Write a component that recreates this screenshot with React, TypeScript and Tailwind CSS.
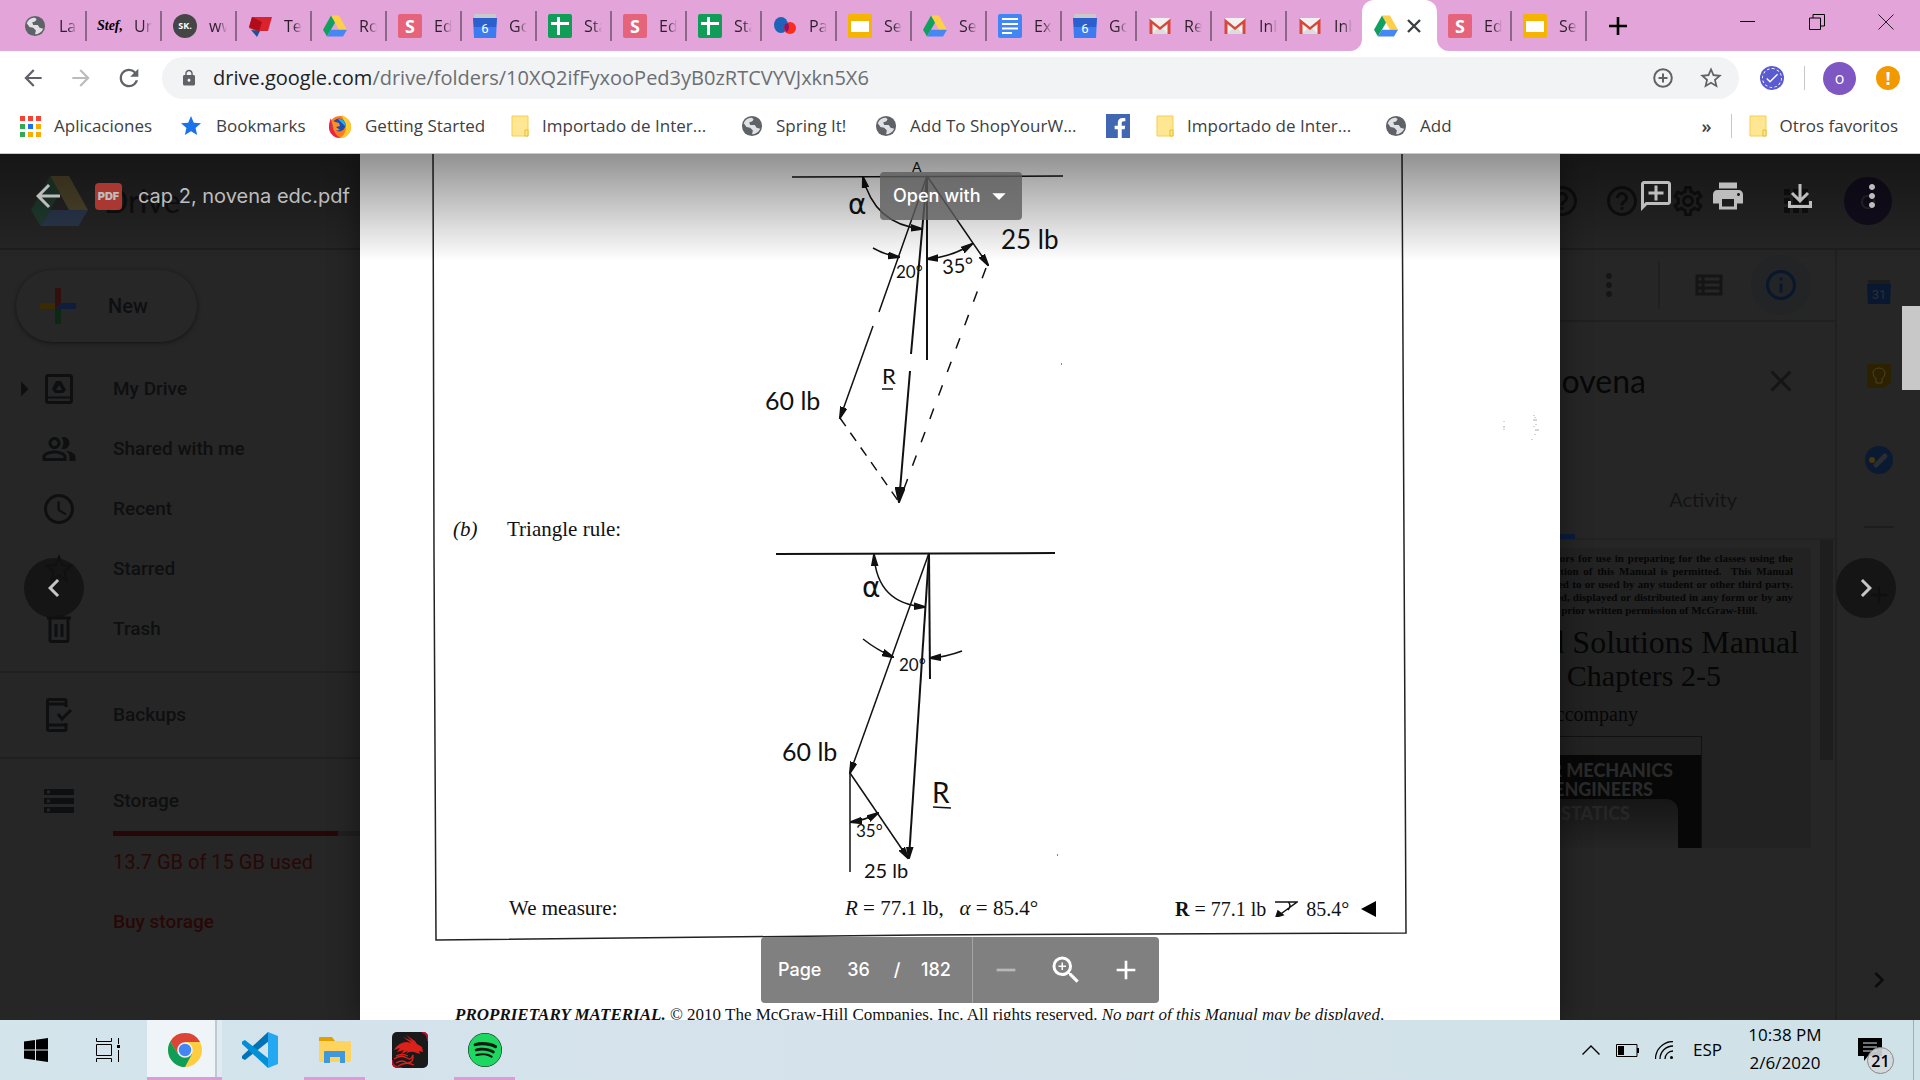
import type { ReactNode } from "react"
import {
  MdAdd,
  MdApps,
  MdArrowBack,
  MdArrowDropDown,
  MdArrowForward,
  MdArrowRight,
  MdCheck,
  MdChevronLeft,
  MdChevronRight,
  MdClose,
  MdHelpOutline,
  MdInfoOutline,
  MdLock,
  MdMoreVert,
  MdOutlineAddComment,
  MdOutlinePeopleAlt,
  MdOutlineSettings,
  MdOutlineViewList,
  MdPrint,
  MdRefresh,
  MdRemove,
  MdSchedule,
  MdStar,
  MdStarBorder,
  MdStorage,
  MdZoomIn,
} from "react-icons/md"
import { FaFacebookF, FaSpotify } from "react-icons/fa"

/* ---------- Small logos ---------- */

const DriveLogo = ({ className = "size-6" }: { className?: string }) => (
  <svg viewBox="0 0 57 50" className={className}>
    <path d="M19 0 L38 0 L57 34 L38 34 Z" fill="#ffcf48" />
    <path d="M19 0 L28.500 17 L9.500 50 L0 34 Z" fill="#11a05e" />
    <path d="M19 34 L57 34 L47.500 50 L9.500 50 Z" fill="#4587f4" />
  </svg>
)

const Globe = () => (
  <svg viewBox="0 0 24 24" className="size-[22px] shrink-0">
    <circle cx="12" cy="12" r="11" fill="#5f6368" />
    <path
      d="M3 9 C5 4 9 3 12 3 L14 5 L12 7 L9 8 L10 11 L15 11 L17 14 L21 15 C19 19 16 21 12 21 L13 17 L10 14 L6 13 Z"
      fill="#dfe1e5"
    />
    <path d="M14 4 L19 6 L21 11 L18 11 L16 8 L13 8 Z" fill="#5f6368" />
  </svg>
)

const Square = ({ children, className }: { children?: ReactNode; className: string }) => (
  <span className={`flex size-6 items-center justify-center rounded-[2px] ${className}`}>{children}</span>
)

const Stef = () => <span className="font-['Liberation_Serif',serif] text-sm font-bold italic text-black">Stef,</span>

const Sk = () => (
  <span className="flex size-6 items-center justify-center rounded-full bg-[#454545] text-[9px] font-bold text-white">
    SK.
  </span>
)

const Hex = () => (
  <svg viewBox="0 0 24 24" className="size-6">
    <path d="M4 3 L24 3 L20 17 L8 17 L1 14 Z" fill="#d9232e" />
    <path d="M4 3 L14 8 L11 17 L1 13 Z" fill="#b00d18" />
    <path d="M3 16 L12 17 L9 23 Z" fill="#17539c" />
  </svg>
)

const Sigma = () => (
  <Square className="bg-[#e5637b]">
    <b className="text-lg text-white">S</b>
  </Square>
)

const CalendarSix = () => (
  <svg viewBox="0 0 24 24" className="size-6">
    <rect x="1" y="0" width="22" height="5" rx="1" fill="#c9c9c9" />
    <path d="M0 4 H24 L23 24 H1 Z" fill="#3d7bf0" />
    <path d="M0 4 H24 L23 13 H1 Z" fill="#2c5fce" />
    <text x="12" y="19" textAnchor="middle" fontSize="13" fontFamily="Roboto, sans-serif" fill="#fff">
      6
    </text>
  </svg>
)

const Sheets = () => (
  <svg viewBox="0 0 24 24" className="size-6">
    <rect width="24" height="24" rx="2" fill="#0f9d58" />
    <path d="M3 9.500 H21 M10.500 3 V21" stroke="#fff" strokeWidth="3" />
  </svg>
)

const Blobs = () => (
  <svg viewBox="0 0 24 24" className="size-6">
    <ellipse cx="8" cy="11" rx="7" ry="8" fill="#1f63b8" />
    <ellipse cx="17" cy="14" rx="6" ry="6" fill="#fb2c1c" />
    <path d="M12 10 A6 6 0 0 0 14 18 A8 8 0 0 0 15 9 Z" fill="#8d1467" />
  </svg>
)

const Slides = () => (
  <svg viewBox="0 0 24 24" className="size-6">
    <rect width="24" height="24" rx="2" fill="#f5b400" />
    <rect x="3" y="7" width="18" height="11" fill="#fff" />
  </svg>
)

const Docs = () => (
  <svg viewBox="0 0 24 24" className="size-6">
    <rect width="24" height="24" rx="2" fill="#4285f4" />
    <path d="M4 5 H20 M4 10 H20 M4 14.500 H20 M4 19 H14" stroke="#fff" strokeWidth="2.200" />
  </svg>
)

const Gmail = () => (
  <svg viewBox="0 0 24 24" className="size-6">
    <path d="M2 4 H22 V20 H2 Z" fill="#f1f1f1" />
    <path d="M4 20 L12 12 L20 20 Z" fill="#dcdcdc" />
    <path d="M1.500 20 V4.500 L12 13 L22.500 4.500 V20 H19.500 V10 L12 16 L4.500 10 V20 Z" fill="#d8483a" />
  </svg>
)

const Folder = () => (
  <svg viewBox="0 0 18 22" className="h-[22px] w-[18px] shrink-0">
    <path d="M1 1 H17 V21 H1 Z" fill="#ffe693" stroke="#f5cf4e" />
    <path d="M14 21 V15 H17 V21 Z" fill="#ffe693" stroke="#e8bd2f" />
  </svg>
)

const Firefox = () => (
  <svg viewBox="0 0 24 24" className="size-6 shrink-0">
    <circle cx="12" cy="13" r="11" fill="#ff7a1a" />
    <path d="M14 1 C18 3 23 7 23 13 A11 11 0 0 1 12 24 C18 20 19 14 17 9 C16 6 14 4 14 1 Z" fill="#ffcb2e" />
    <path d="M12 24 A11 11 0 0 1 1 13 C1 9 2 6 3 4 C4 10 4 18 12 24 Z" fill="#e8234b" />
    <circle cx="11" cy="11" r="6.500" fill="#1c4fb3" />
    <path d="M4 7 L11 9 L12 12 L8 13 L12 16 L6 17 Z" fill="#ff8f1f" />
    <path d="M10 5 A6 6 0 0 1 17 12 L13 8 Z" fill="#21b4ef" />
  </svg>
)

const AppsGrid = () => (
  <span className="grid shrink-0 grid-cols-3 gap-[3px]">
    {["bg-[#f44336]", "bg-[#f44336]", "bg-[#f44336]", "bg-[#34a853]", "bg-[#1a73e8]", "bg-[#fbab00]", "bg-[#34a853]", "bg-[#fbab00]", "bg-[#fbab00]"].map(
      (c, i) => (
        <span key={i} className={`size-[5px] ${c}`} />
      )
    )}
  </span>
)

/* ---------- Browser chrome ---------- */

const tabs = [
  { label: "Las", icon: <Globe /> },
  { label: "Un", icon: <Stef /> },
  { label: "ww", icon: <Sk /> },
  { label: "Tec", icon: <Hex /> },
  { label: "Ro", icon: <DriveLogo /> },
  { label: "Ed", icon: <Sigma /> },
  { label: "Go", icon: <CalendarSix /> },
  { label: "Sta", icon: <Sheets /> },
  { label: "Ed", icon: <Sigma /> },
  { label: "Sta", icon: <Sheets /> },
  { label: "Pa", icon: <Blobs /> },
  { label: "Se", icon: <Slides /> },
  { label: "Se", icon: <DriveLogo /> },
  { label: "Ex", icon: <Docs /> },
  { label: "Go", icon: <CalendarSix /> },
  { label: "Re", icon: <Gmail /> },
  { label: "Inb", icon: <Gmail /> },
  { label: "Inb", icon: <Gmail /> },
  { label: "", icon: <DriveLogo />, active: true },
  { label: "Ed", icon: <Sigma /> },
  { label: "Se", icon: <Slides /> },
]

const bookmarks = [
  { label: "Aplicaciones", icon: <AppsGrid />, width: "w-[159px]" },
  { label: "Bookmarks", icon: <MdStar className="size-6 shrink-0 text-[#1a73e8]" />, width: "w-[149px]" },
  { label: "Getting Started", icon: <Firefox />, width: "w-[183px]" },
  { label: "Importado de Inter...", icon: <Folder />, width: "w-[230px]" },
  { label: "Spring It!", icon: <Globe />, width: "w-[134px]" },
  { label: "Add To ShopYourW...", icon: <Globe />, width: "w-[231px]" },
  {
    label: "",
    icon: (
      <span className="flex size-6 items-end justify-end bg-[#4267b2]">
        <FaFacebookF className="size-5 text-white" />
      </span>
    ),
    width: "w-[50px]",
  },
  { label: "Importado de Inter...", icon: <Folder />, width: "w-[229px]" },
  { label: "Add", icon: <Globe />, width: "w-[80px]" },
]

function TabStrip() {
  return (
    <div className="flex h-[51px] shrink-0 bg-[#e3a4da] pl-3 text-[#2b1f2a]">
      {tabs.map((tab, i) =>
        tab.active ? (
          <div key={i} className="relative flex w-[75px] items-center justify-between rounded-t-xl bg-white pl-3 pr-4">
            {/* flared feet of the active tab */}
            <svg viewBox="0 0 12 12" className="absolute -left-3 bottom-0 size-3">
              <path d="M12 0 V12 H0 A12 12 0 0 0 12 0 Z" fill="#fff" />
            </svg>
            <svg viewBox="0 0 12 12" className="absolute -right-3 bottom-0 size-3">
              <path d="M0 0 V12 H12 A12 12 0 0 1 0 0 Z" fill="#fff" />
            </svg>
            {tab.icon}
            <button aria-label="Close tab">
              <svg viewBox="0 0 14 14" className="size-[14px]" stroke="#3c4043" strokeWidth="2.400">
                <path d="M1 1 L13 13 M13 1 L1 13" />
              </svg>
            </button>
          </div>
        ) : (
          <button
            key={i}
            className={`flex w-[75px] items-center ${tabs[i + 1]?.active ? "" : "bg-[linear-gradient(#8d6788,#8d6788)] bg-[length:2px_30px] bg-right bg-no-repeat"}`}
          >
            <span className="ml-[11px] flex w-6 shrink-0 justify-center">{tab.icon}</span>
            <span className="ml-3 w-[18px] overflow-hidden text-left text-base whitespace-nowrap [mask-image:linear-gradient(to_right,#000_50%,transparent)]">
              {tab.label}
            </span>
          </button>
        )
      )}
      <button aria-label="New tab" className="flex w-[62px] items-center justify-center text-black">
        <svg viewBox="0 0 18 18" className="size-[18px]" stroke="currentColor" strokeWidth="2.600">
          <path d="M9 0 V18 M0 9 H18" />
        </svg>
      </button>
      <div className="ml-auto flex h-[43px]">
        <button aria-label="Minimize" className="flex w-[69px] items-center justify-center">
          <span className="h-px w-[15px] bg-black" />
        </button>
        <button aria-label="Restore" className="flex w-[69px] items-center justify-center">
          <svg viewBox="0 0 16 16" className="size-4" fill="none" stroke="#000">
            <path d="M0.500 4 H11.500 V15.500 H0.500 Z M4 4 V0.500 H15.500 V12 H11.500" />
          </svg>
        </button>
        <button aria-label="Close" className="flex w-[69px] items-center justify-center">
          <svg viewBox="0 0 16 16" className="size-4" stroke="#222">
            <path d="M0.500 0.500 L15.500 15.500 M15.500 0.500 L0.500 15.500" />
          </svg>
        </button>
      </div>
    </div>
  )
}

function AddressBar() {
  return (
    <div className="flex h-[54px] shrink-0 items-center bg-white pl-[9px]">
      <button aria-label="Back" className="flex w-12 justify-center text-[#5f6368]">
        <MdArrowBack className="size-[26px]" />
      </button>
      <button aria-label="Forward" className="flex w-12 justify-center text-[#babcbe]">
        <MdArrowForward className="size-[26px]" />
      </button>
      <button aria-label="Reload" className="flex w-12 justify-center text-[#5f6368]">
        <MdRefresh className="size-7" />
      </button>
      <div className="relative ml-[9px] flex h-[42px] flex-1 items-center rounded-full bg-[#f1f3f4] pl-[18px] text-[#5f6368]">
        <MdLock className="size-[18px]" />
        <a
          href="#folder"
          aria-label="Address"
          className="ml-[15px] flex-1 text-xl whitespace-nowrap text-[#6b6e72]"
        >
          <span className="text-[#202124]">drive.google.com</span>/drive/folders/10XQ2ifFyxooPed3yB0zRTCVYVJxkn5X6
        </a>
        <button aria-label="Zoom" className="flex w-12 justify-center">
          <svg viewBox="0 0 20 20" className="size-5" fill="none" stroke="currentColor" strokeWidth="2">
            <circle cx="10" cy="10" r="8.800" />
            <path d="M10 5.500 V14.500 M5.500 10 H14.500" />
          </svg>
        </button>
        <button aria-label="Bookmark this page" className="mr-1 flex w-12 justify-center">
          <MdStarBorder className="size-[26px]" />
        </button>
      </div>
      <div className="ml-[21px] flex items-center">
        <button aria-label="Extension" className="flex size-6 items-center justify-center rounded-full bg-[#5b5bd0]">
          <span className="flex size-5 items-center justify-center rounded-full border border-dashed border-white">
            <MdCheck className="size-4 text-white" />
          </span>
        </button>
        <span className="ml-5 h-6 w-px bg-[#c4c6c9]" />
        <button aria-label="Profile" className="ml-[18px] flex size-[33px] items-center justify-center rounded-full bg-[#7e57c2] text-base text-white">
          o
        </button>
        <button aria-label="Update" className="mr-5 ml-5 flex size-6 items-center justify-center rounded-full bg-[#f29900] text-lg font-bold text-white">
          !
        </button>
      </div>
    </div>
  )
}

function BookmarksBar() {
  return (
    <div className="flex h-[49px] shrink-0 items-center border-b border-[#c9cacc] bg-white pb-1.5 pl-5 text-[17px] text-[#3c4043]">
      {bookmarks.map((b, i) => (
        <a key={i} href="#bookmark" className={`flex shrink-0 items-center gap-[13px] whitespace-nowrap ${b.width}`}>
          {b.icon}
          {b.label}
        </a>
      ))}
      <button aria-label="More bookmarks" className="ml-auto text-lg font-semibold">
        »
      </button>
      <span className="ml-[19px] h-6 w-px bg-[#c4c6c9]" />
      <a href="#others" className="mr-[22px] ml-[17px] flex items-center gap-[13px] whitespace-nowrap">
        <Folder />
        Otros favoritos
      </a>
    </div>
  )
}

/* ---------- Drive, dimmed behind the viewer ---------- */

const MyDriveIcon = () => (
  <svg viewBox="0 0 28 30" className="h-[30px] w-7" fill="none" stroke="currentColor" strokeWidth="3">
    <rect x="1.500" y="1.500" width="25" height="27" rx="2" />
    <path d="M2 23.500 H26" strokeWidth="2" />
    <path d="M11 7 H16 L21 16 L18 19 H10 L7 15 Z M14 11 L11 16 H17 Z" fill="currentColor" fillRule="evenodd" stroke="none" />
  </svg>
)

const TrashIcon = () => (
  <svg viewBox="0 0 24 28" className="h-7 w-6" fill="none" stroke="currentColor" strokeWidth="3">
    <path d="M0 3 H24 M8 1 H16" />
    <path d="M3 4 V25 Q3 26.500 4.500 26.500 H19.500 Q21 26.500 21 25 V4" />
    <path d="M9 9 V22 M15 9 V22" />
  </svg>
)

const BackupIcon = () => (
  <svg viewBox="0 0 26 34" className="h-[34px] w-[26px]" fill="none" stroke="currentColor" strokeWidth="3">
    <path d="M20 9 V3 Q20 1.500 18.500 1.500 H3 Q1.500 1.500 1.500 3 V31 Q1.500 32.500 3 32.500 H18.500 Q20 32.500 20 31 V25 M2 6 H20 M2 27 H20" />
    <path d="M12 16 L16 21 L25 12" />
  </svg>
)

const navItems = [
  { label: "My Drive", icon: <MyDriveIcon /> },
  { label: "Shared with me", icon: <MdOutlinePeopleAlt className="size-9" /> },
  { label: "Recent", icon: <MdSchedule className="size-9" /> },
  { label: "Starred", icon: <MdStarBorder className="size-9" /> },
  { label: "Trash", icon: <TrashIcon /> },
]

function NavRow({ label, icon }: { label: string; icon: ReactNode }) {
  return (
    <a href="#nav" className="flex h-[60px] items-center">
      <span className="ml-10 flex w-[38px] justify-center">{icon}</span>
      <span className="ml-[35px]">{label}</span>
    </a>
  )
}

function Sidebar() {
  return (
    <aside className="w-[360px] shrink-0 font-['Roboto',sans-serif] text-[19px] font-medium text-[#0e0f10]">
      <button className="mt-5 ml-4 flex h-[72px] w-[181px] items-center rounded-full bg-[#272727] pl-6 shadow-[0_1px_4px_rgba(0,0,0,0.5)]">
        <svg viewBox="0 0 36 36" className="size-9">
          <path d="M15 0 H21 V15 L15 21 Z" fill="#33100d" />
          <path d="M0 15 H15 V21 H0 Z" fill="#3a2b05" />
          <path d="M15 21 H21 V36 H15 Z" fill="#0c2814" />
          <path d="M21 15 H36 V21 H15 Z" fill="#101d3a" />
        </svg>
        <span className="ml-8 text-xl tracking-normal">New</span>
      </button>
      <nav className="relative mt-[17px] border-b-2 border-[#202020] pb-3">
        <MdArrowRight className="absolute top-3 left-1.5 size-9" />
        {navItems.map((item) => (
          <NavRow key={item.label} {...item} />
        ))}
      </nav>
      <div className="border-b-2 border-[#202020] py-3">
        <NavRow label="Backups" icon={<BackupIcon />} />
      </div>
      <div className="pt-3">
        <NavRow label="Storage" icon={<MdStorage className="size-9" />} />
        <div className="ml-[113px] h-[5px] bg-[#1f1f20]">
          <div className="h-full w-[225px] bg-[#240706]" />
        </div>
        <p className="mt-3 ml-[113px] text-xl leading-7 font-normal text-[#280807]">13.7 GB of 15 GB used</p>
        <a href="#buy" className="mt-8 ml-[113px] block leading-7 text-[#280807]">
          Buy storage
        </a>
      </div>
    </aside>
  )
}

function Thumbnail() {
  return (
    <div className="mt-2 ml-6 h-[300px] w-[311px] overflow-hidden bg-[#222222] text-right font-['Liberation_Serif',serif] text-[#060606]">
      <div className="flex h-[68px] flex-col items-end pt-1 pr-[18px] text-[11px] leading-[13px] font-bold whitespace-nowrap [text-align-last:justify]">
        <p className="w-[270px]">instructors for use in preparing for the classes using the</p>
        <p className="w-[270px]">distribution of this Manual is permitted.&nbsp; This Manual</p>
        <p className="w-[276px]">distributed to or used by any student or other third party.</p>
        <p className="w-[280px]">reproduced, displayed or distributed in any form or by any</p>
        <p className="mr-9 w-[252px]">without the prior written permission of McGraw-Hill.</p>
      </div>
      <p className="mt-2.5 mr-3 text-[32px] leading-[33px] whitespace-nowrap">and Solutions Manual</p>
      <p className="mr-[90px] text-[30px] leading-[33px] whitespace-nowrap">, Chapters 2-5</p>
      <p className="mt-2 mr-[173px] text-xl leading-7">accompany</p>
      <div className="mt-2 mr-[109px] flex h-[130px] flex-col border border-[#111] font-['Lato',sans-serif] font-black text-[#2a2a2a]">
        <div className="h-[18px]" />
        <div className="h-[44px] bg-[#070707] pt-1.5 pr-7 text-lg leading-[19px]">
          <p>FOR MECHANICS</p>
          <p className="pr-5">ENGINEERS</p>
        </div>
        <div className="flex h-[66px] bg-[#070707]">
          <div className="mr-[23px] flex-1 rounded-tr-xl bg-gradient-to-b from-[#161616] to-[#2a2a2a] pr-12 text-lg text-[#262626]">
            STATICS
          </div>
        </div>
      </div>
    </div>
  )
}

function DetailsPanel() {
  return (
    <section className="w-[360px] shrink-0 border-r border-[#202020] text-[#151515]">
      <div className="flex h-[72px] items-center justify-end border-b-2 border-[#202020] pr-6">
        <MdMoreVert className="size-9" />
        <span className="ml-[31px] h-12 w-0.5 bg-[#202020]" />
        <MdOutlineViewList className="ml-[31px] size-9" />
        <span className="ml-6 flex size-[60px] items-center justify-center rounded-full bg-[#222426] text-[#08172d]">
          <MdInfoOutline className="size-9" />
        </span>
      </div>
      <div className="flex h-[118px] items-center justify-end pr-9">
        <h2 className="mr-[117px] text-[32px] text-[#070707]">novena</h2>
        <MdClose className="size-9" />
      </div>
      <div className="relative flex h-[100px] items-center justify-end border-b-2 border-[#202223] pt-5 pr-[98px] text-xl text-[#131313]">
        <span className="absolute -bottom-px left-0 h-[5px] w-[99px] bg-[#0a1c3c]" />
        Activity
      </div>
      <div className="flex justify-between pr-0.5">
        <Thumbnail />
        <span className="h-[220px] w-[13px] bg-[#1e1e1e]" />
      </div>
    </section>
  )
}

function SideRail() {
  return (
    <section className="flex w-[84px] shrink-0 flex-col items-center border-l border-[#202020] pt-[30px]">
      <svg viewBox="0 0 24 24" className="size-6">
        <rect x="1" width="22" height="5" fill="#1c1c1c" />
        <path d="M0 4 H24 L23 24 H1 Z" fill="#0a1730" />
        <text x="12" y="19" textAnchor="middle" fontSize="13" fontFamily="Roboto, sans-serif" fill="#2a2f38">
          31
        </text>
      </svg>
      <svg viewBox="0 0 24 24" className="mt-[60px] size-6">
        <path d="M1 0 H23 Q24 0 24 1 V18 L18 24 H1 Q0 24 0 23 V1 Q0 0 1 0 Z" fill="#2d2200" />
        <path d="M9 15 Q6 12 6 9 A6 5 0 0 1 18 9 Q18 12 15 15 V19 H9 Z" fill="none" stroke="#4a4128" />
      </svg>
      <svg viewBox="0 0 28 28" className="mt-[58px] size-7">
        <circle cx="14" cy="14" r="14" fill="#0b1a33" />
        <circle cx="7" cy="14" r="3" fill="#4a3808" />
        <path d="M11 19 L20 10" stroke="#2b2d30" strokeWidth="5" strokeLinecap="round" />
      </svg>
      <span className="mt-[52px] h-0.5 w-[30px] bg-[#1d1d1d]" />
      <MdAdd className="mt-[53px] size-7 text-[#050505]" />
      <MdChevronRight className="mt-auto mb-6 size-8 text-[#0c0c0c]" />
    </section>
  )
}

function DriveApp() {
  return (
    <div className="flex h-full flex-col">
      <header className="flex h-24 shrink-0 items-center border-b-2 border-[#1e1e1e] text-[#101010]">
        <DriveLogo className="ml-[31px] h-[50px] w-[57px] opacity-20" />
        <span className="ml-4 text-[32px]">Drive</span>
        <div className="ml-auto flex items-center">
          <MdHelpOutline className="size-9" />
          <MdHelpOutline className="ml-6 size-9" />
          <MdOutlineSettings className="ml-[30px] size-9" />
          <MdApps className="ml-[72px] size-9" />
          <span className="mr-7 ml-[30px] flex size-12 items-center justify-center rounded-full bg-[#130d1e] text-xl text-[#2a2a2a]">
            O
          </span>
        </div>
      </header>
      <div className="flex min-h-0 flex-1">
        <Sidebar />
        <div className="min-w-0 flex-1" />
        <DetailsPanel />
        <SideRail />
      </div>
    </div>
  )
}

/* ---------- PDF page ---------- */

const Arrowheads = () => (
  <defs>
    <marker id="head" viewBox="0 0 12 8" refX="11" refY="4" markerWidth="12" markerHeight="8" markerUnits="userSpaceOnUse" orient="auto-start-reverse">
      <path d="M0 1 L12 4 L0 7 Z" fill="#111" />
    </marker>
    <marker id="bighead" viewBox="0 0 16 10" refX="15" refY="5" markerWidth="16" markerHeight="10" markerUnits="userSpaceOnUse" orient="auto-start-reverse">
      <path d="M0 0 L16 5 L0 10 Z" fill="#111" />
    </marker>
  </defs>
)

function ParallelogramFigure() {
  return (
    <svg viewBox="0 0 1200 360" className="h-[360px] w-[1200px] shrink-0" fill="none" stroke="#111" strokeWidth="1.500">
      <Arrowheads />
      <path d="M432 23 L703 22" />
      <path d="M567 22 L519 158" />
      <path d="M513 172 L480 264" markerEnd="url(#head)" />
      <path d="M567 22 L551 200" strokeWidth="2" />
      <path d="M550 217 L539 348" strokeWidth="2" markerEnd="url(#bighead)" />
      <path d="M567 22 L567 206" strokeWidth="2" />
      <path d="M567 22 L628 111" markerEnd="url(#head)" />
      <path d="M626 114 L539 348" strokeDasharray="11 14" />
      <path d="M480 264 L539 348" strokeDasharray="10 8" />
      <path d="M503 23 Q514 70 562 75" markerStart="url(#head)" markerEnd="url(#head)" />
      <path d="M513 94 Q525 101 539 103" markerEnd="url(#head)" />
      <path d="M567 105 Q592 103 612 90" markerStart="url(#head)" markerEnd="url(#head)" />
      <path d="M522 235 H533" />
      {/* scanner specks */}
      <path d="M701 210 h1" strokeWidth="1" />
      <path d="M1144 267 v1 M1144 272 v2 M1144 275 v1 M1174 261 v1 M1175 263 v1 M1173 266 h4 M1176 270 v1 M1174 272 v1 M1175 276 h4 M1175 280 v1 M1172 285 v1" stroke="#aaa" strokeWidth="1" />
      <g fill="#111" stroke="none" fontFamily="Lato, sans-serif">
        <text x="552" y="18" fontSize="14">A</text>
        <text x="488" y="60" fontSize="28" fontFamily="'DejaVu Sans', sans-serif">α</text>
        <text x="536" y="124" fontSize="17">20°</text>
        <text x="582" y="119" fontSize="20" transform="rotate(-5 598 111)">35°</text>
        <text x="641" y="95" fontSize="26">25 lb</text>
        <text x="522" y="230" fontSize="22">R</text>
        <text x="405" y="256" fontSize="25">60 lb</text>
      </g>
    </svg>
  )
}

function TriangleFigure() {
  return (
    <svg viewBox="0 0 1200 338" className="h-[338px] w-[1200px] shrink-0" fill="none" stroke="#111" strokeWidth="1.500">
      <path d="M416 8 L695 7" strokeWidth="2" />
      <path d="M569 7 L490 227" markerEnd="url(#head)" />
      <path d="M569 7 L549 312" strokeWidth="2" markerEnd="url(#head)" />
      <path d="M569 7 L570 133" strokeWidth="2" />
      <path d="M490 227 L548 312" markerEnd="url(#head)" />
      <path d="M490 227 V326" />
      <path d="M514 9 Q517 58 565 61" markerStart="url(#head)" markerEnd="url(#head)" />
      <path d="M503 93 Q517 104 533 111" markerEnd="url(#head)" />
      <path d="M602 105 Q586 111 570 112" markerEnd="url(#head)" />
      <path d="M491 276 Q506 274 518 267" markerStart="url(#head)" markerEnd="url(#head)" />
      <path d="M573 261 L591 262" />
      <path d="M697 309 h1" strokeWidth="1" />
      <g fill="#111" stroke="none" fontFamily="Lato, sans-serif">
        <text x="502" y="51" fontSize="28" fontFamily="'DejaVu Sans', sans-serif">α</text>
        <text x="539" y="125" fontSize="17">20°</text>
        <text x="422" y="215" fontSize="25">60 lb</text>
        <text x="496" y="291" fontSize="17">35°</text>
        <text x="504" y="332" fontSize="20">25 lb</text>
        <text x="572" y="257" fontSize="28">R</text>
      </g>
    </svg>
  )
}

function PdfPage() {
  return (
    <article className="relative flex h-full w-[1200px] shrink-0 flex-col overflow-hidden bg-white font-['Liberation_Serif',serif] text-[21px] text-[#111]">
      {/* scanned page frame, slightly skewed */}
      <svg viewBox="0 0 1200 866" className="absolute top-0 left-0 h-[866px] w-[1200px]" fill="none" stroke="#222" strokeWidth="1.500">
        <path d="M73 0 L74 400 L76 786 L560 781 L1046 779 L1042 0" />
      </svg>
      <ParallelogramFigure />
      <div className="flex h-8 shrink-0 items-center pl-[93px]">
        <span className="w-[54px] italic">(b)</span>
        <span>Triangle rule:</span>
      </div>
      <TriangleFigure />
      <div className="flex h-[50px] shrink-0 items-center pl-[149px]">
        <span className="w-[336px]">We measure:</span>
        <span className="w-[330px] whitespace-pre">
          <i>R</i> = 77.1 lb,{"   "}<i>α</i> = 85.4°
        </span>
        <span className="flex items-center gap-2 text-xl">
          <span>
            <b>R</b> = 77.1 lb
          </span>
          <svg viewBox="0 0 24 16" className="h-4 w-6" fill="none" stroke="#111" strokeWidth="1.500">
            <path d="M1 1 H23 L4 15 M14 1 Q18 4 14 9" />
            <path d="M2 16 L4 10 L9 14 Z" fill="#111" />
          </svg>
          <span>85.4°</span>
          <svg viewBox="0 0 15 16" className="ml-1 h-4 w-[15px]">
            <path d="M15 0 V16 L0 8 Z" fill="#000" />
          </svg>
        </span>
      </div>
      <p className="mt-[71px] ml-[95px] shrink-0 text-[17px] leading-5 whitespace-nowrap">
        <b className="italic">PROPRIETARY MATERIAL.</b> © 2010 The McGraw-Hill Companies, Inc. All rights reserved.{" "}
        <i>No part of this Manual may be displayed,</i>
      </p>
    </article>
  )
}

/* ---------- Viewer controls ---------- */

function ViewerTopBar() {
  return (
    <div className="absolute inset-x-0 top-0 flex h-[107px] items-start bg-gradient-to-b from-black/43 to-transparent font-['Inter',sans-serif] text-[#bdbdbd]">
      <div className="flex h-[84px] flex-1 items-center pl-3">
        <button aria-label="Close viewer" className="ml-[18px]">
          <MdArrowBack className="size-9" />
        </button>
        <span className="ml-[29px] flex size-[27px] items-center justify-center rounded bg-[#a93832] text-[11px] font-black">PDF</span>
        <span className="ml-4 text-xl">cap 2, novena edc.pdf</span>
      </div>
      <button className="mt-[18px] flex h-12 w-[142px] items-center rounded bg-[#5c5c5c]/80 pl-[13px] text-lg font-medium text-white">
        Open with
        <MdArrowDropDown className="ml-0.5 size-8" />
      </button>
      <div className="flex h-[84px] flex-1 items-center justify-end pr-[30px]">
        <button aria-label="Add a comment" className="flex w-[72px] justify-end">
          <MdOutlineAddComment className="size-9 -scale-x-100" />
        </button>
        <button aria-label="Print" className="flex w-[72px] justify-end">
          <MdPrint className="size-9" />
        </button>
        <button aria-label="Download" className="flex w-[72px] justify-end">
          <svg viewBox="0 0 36 36" className="size-9" fill="none" stroke="currentColor" strokeWidth="3">
            <path d="M18 6 V22 M10 15 L18 23 L26 15 M7.500 23 V28.500 H28.500 V23" />
          </svg>
        </button>
        <button aria-label="More actions" className="flex w-[72px] justify-end">
          <MdMoreVert className="size-9" />
        </button>
      </div>
    </div>
  )
}

function PageControls() {
  return (
    <div className="absolute bottom-[17px] left-1/2 flex h-[66px] w-[398px] -translate-x-1/2 items-center rounded bg-[#808080] font-['Inter',sans-serif] text-lg font-medium text-white">
      <label htmlFor="page" className="w-[70px] pl-[17px]">
        Page
      </label>
      <input id="page" defaultValue="36" className="w-[55px] bg-transparent text-center" />
      <span className="w-[22px] text-center">/</span>
      <span className="flex-1 pr-2 text-center">182</span>
      <span className="h-full w-px bg-[#a4a4a4]" />
      <div className="flex h-full w-[186px] items-center justify-between px-[17px]">
        <button aria-label="Zoom out" className="text-[#b8b8b8]">
          <MdRemove className="size-8" />
        </button>
        <button aria-label="Fit to width">
          <MdZoomIn className="size-9" />
        </button>
        <button aria-label="Zoom in">
          <MdAdd className="size-8" />
        </button>
      </div>
    </div>
  )
}

function Viewer() {
  return (
    <div className="absolute inset-0">
      <div className="flex h-full justify-center">
        <div className="h-full shadow-[0_0_28px_rgba(0,0,0,0.45)]">
          <PdfPage />
        </div>
      </div>
      <ViewerTopBar />
      <button aria-label="Previous" className="absolute top-[404px] left-6 flex size-[60px] items-center justify-center rounded-full bg-[#111]/80 text-[#c6c6c6]">
        <MdChevronLeft className="size-9" />
      </button>
      <button aria-label="Next" className="absolute top-[404px] right-6 flex size-[60px] items-center justify-center rounded-full bg-[#111]/80 text-[#c6c6c6]">
        <MdChevronRight className="size-9" />
      </button>
      <span className="absolute top-[152px] right-0 h-[84px] w-[18px] bg-[#c8c8c8]" />
      <PageControls />
    </div>
  )
}

/* ---------- Windows taskbar ---------- */

const ChromeLogo = () => (
  <svg viewBox="0 0 34 34" className="size-[34px]">
    <circle cx="17" cy="17" r="17" fill="#ffcd40" />
    <path d="M2.300 8.500 A17 17 0 0 1 32 9 H17 L10 21 Z" fill="#db4437" />
    <path d="M2.300 8.500 A17 17 0 0 0 17 34 L24 21 L10 21 Z" fill="#0f9d58" />
    <circle cx="17" cy="17" r="7.800" fill="#f1f1f1" />
    <circle cx="17" cy="17" r="6.200" fill="#4285f4" />
  </svg>
)

const CodeLogo = () => (
  <svg viewBox="0 0 36 36" className="size-9">
    <path d="M26 0 L0 24 Q-1 26 1 27 L3 28 L27 9 Z" fill="#0073b7" />
    <path d="M26 36 L0 12 Q-1 10 1 9 L3 8 L27 27 Z" fill="#0090d8" />
    <path d="M26 0 L36 4 V32 L26 36 Z" fill="#25a8f2" />
  </svg>
)

const ExplorerLogo = () => (
  <svg viewBox="0 0 32 28" className="h-7 w-8">
    <path d="M0 2 Q0 1 1 1 H13 L16 5 H0 Z" fill="#e0a100" />
    <path d="M0 5 H31 Q32 5 32 6 V25 Q32 26 31 26 H1 Q0 26 0 25 Z" fill="#ffd45e" />
    <path d="M5 27 V16 Q5 15 6 15 H26 V27 H21 V21 H11 V27 Z" fill="#3f97de" />
  </svg>
)

const DragonLogo = () => (
  <svg viewBox="0 0 36 36" className="size-9">
    <rect width="36" height="36" rx="5" fill="#1a1a1a" />
    <path d="M30 0 Q36 1 36 9 M0 28 Q0 36 10 36" fill="none" stroke="#b3122e" strokeWidth="2" />
    <path
      d="M2 18 Q7 10 15 10 L19 11 L11 5 L20 9 L14 3 L23 9 L25 12 L30 15 L31 20 L27 19 L28 22 L22 20 Q17 19 14 22 L16 19 L9 22 L12 18 L5 20 L8 16 Z"
      fill="#dc211b"
    />
    <path d="M2 27 Q9 22 15 26 Q19 29 21 23 Q22 31 15 31 Q10 27 4 31 M6 34 Q14 29 22 33 M4 24 Q10 21 16 24" fill="none" stroke="#dc211b" strokeWidth="1.300" />
  </svg>
)

const SpotifyLogo = () => (
  <span className="rounded-full bg-[#0c1a10]">
    <FaSpotify className="size-[34px] text-[#1ed760]" />
  </span>
)

const taskApps = [
  { name: "Chrome", icon: <ChromeLogo />, open: true, active: true },
  { name: "Visual Studio Code", icon: <CodeLogo /> },
  { name: "File Explorer", icon: <ExplorerLogo />, open: true },
  { name: "Dragon Center", icon: <DragonLogo /> },
  { name: "Spotify", icon: <SpotifyLogo />, open: true },
]

function Taskbar() {
  return (
    <footer className="flex h-[60px] shrink-0 bg-gradient-to-r from-[#d3e4eb] via-[#d6e2eb] to-[#cfe2e8] text-black">
      <button aria-label="Start" className="flex w-[72px] items-center justify-center">
        <svg viewBox="0 0 24 24" className="size-6">
          <path d="M0 3.500 L11 2 V11.500 H0 Z M12 1.800 L24 0 V11.500 H12 Z M0 12.500 H11 V22 L0 20.500 Z M12 12.500 H24 V24 L12 22.200 Z" />
        </svg>
      </button>
      <button aria-label="Task view" className="flex w-[75px] items-center justify-center pr-1">
        <svg viewBox="0 0 24 24" className="size-6" fill="none" stroke="#000">
          <path d="M0.500 0 V3.500 H15.500 V0 M0.500 6.500 H15.500 V17.500 H0.500 Z M0.500 24 V20.500 H15.500 V24 M22.500 0 V6 M22.500 12 V24" />
          <path d="M21 7 H24 V10 H21 Z" fill="#000" stroke="none" />
        </svg>
      </button>
      {taskApps.map((app) => (
        <button
          key={app.name}
          aria-label={app.name}
          className={`relative flex w-[75px] items-center justify-center ${app.active ? "bg-[#eff4f8]" : ""}`}
        >
          {app.icon}
          {app.active && <span className="absolute inset-y-0 right-0 w-[7px] border-l-2 border-[#bccad4] bg-[#e1eaf1]" />}
          {app.open && (
            <span className={`absolute bottom-0 h-[3px] bg-[#dd9cd6] ${app.active ? "inset-x-0" : "inset-x-[7px]"}`} />
          )}
        </button>
      ))}
      <div className="ml-auto flex items-center">
        <button aria-label="Show hidden icons">
          <svg viewBox="0 0 18 10" className="h-2.5 w-[18px]" fill="none" stroke="#000" strokeWidth="1.400">
            <path d="M0.500 9.500 L9 1 L17.500 9.500" />
          </svg>
        </button>
        <svg viewBox="0 0 23 13" className="ml-4 h-[13px] w-[23px]" fill="none" stroke="#000">
          <path d="M0.500 0.500 H21 V12.500 H0.500 Z" />
          <path d="M2 2 H8 V11 H2 Z M21 4 H23 V9 H21 Z" fill="#000" stroke="none" />
        </svg>
        <svg viewBox="0 0 18 18" className="ml-4 size-[18px]" fill="none" stroke="#000" strokeWidth="1.300">
          <path d="M0.500 18 A17.500 17.500 0 0 1 18 0.500 M5 18 A13 13 0 0 1 18 5 M10 18 A8 8 0 0 1 18 10" />
          <circle cx="16.500" cy="16.500" r="1.500" fill="#000" stroke="none" />
        </svg>
        <span className="ml-5 text-[17px]">ESP</span>
        <div className="mr-1 ml-[26px] w-[74px] pb-0.5 text-center text-[17px] leading-7 whitespace-nowrap">
          <p>10:38 PM</p>
          <p>2/6/2020</p>
        </div>
        <button aria-label="Notifications" className="relative ml-8 h-6 w-6">
          <svg viewBox="0 0 24 24" className="size-6">
            <path d="M0 0 H24 V18 H10 L6 23 V18 H0 Z" />
            <path d="M5 5 H19 M5 9 H19 M5 13 H19" stroke="#d4e3ea" />
          </svg>
          <span className="absolute top-[9px] left-[9px] flex size-[27px] items-center justify-center rounded-full border border-[#888] bg-[#d4d8db]/90 text-base font-semibold">
            21
          </span>
        </button>
        <span className="mr-1.5 ml-[31px] h-[60px] w-px bg-[#9eafb8]" />
      </div>
    </footer>
  )
}

export default function App() {
  return (
    <div className="flex h-screen flex-col overflow-hidden bg-white font-['Open_Sans','Noto_Sans',sans-serif]">
      <TabStrip />
      <AddressBar />
      <BookmarksBar />
      <main className="relative min-h-0 flex-1 overflow-hidden bg-[#262626] font-['Lato',sans-serif]">
        <DriveApp />
        <Viewer />
      </main>
      <Taskbar />
    </div>
  )
}
